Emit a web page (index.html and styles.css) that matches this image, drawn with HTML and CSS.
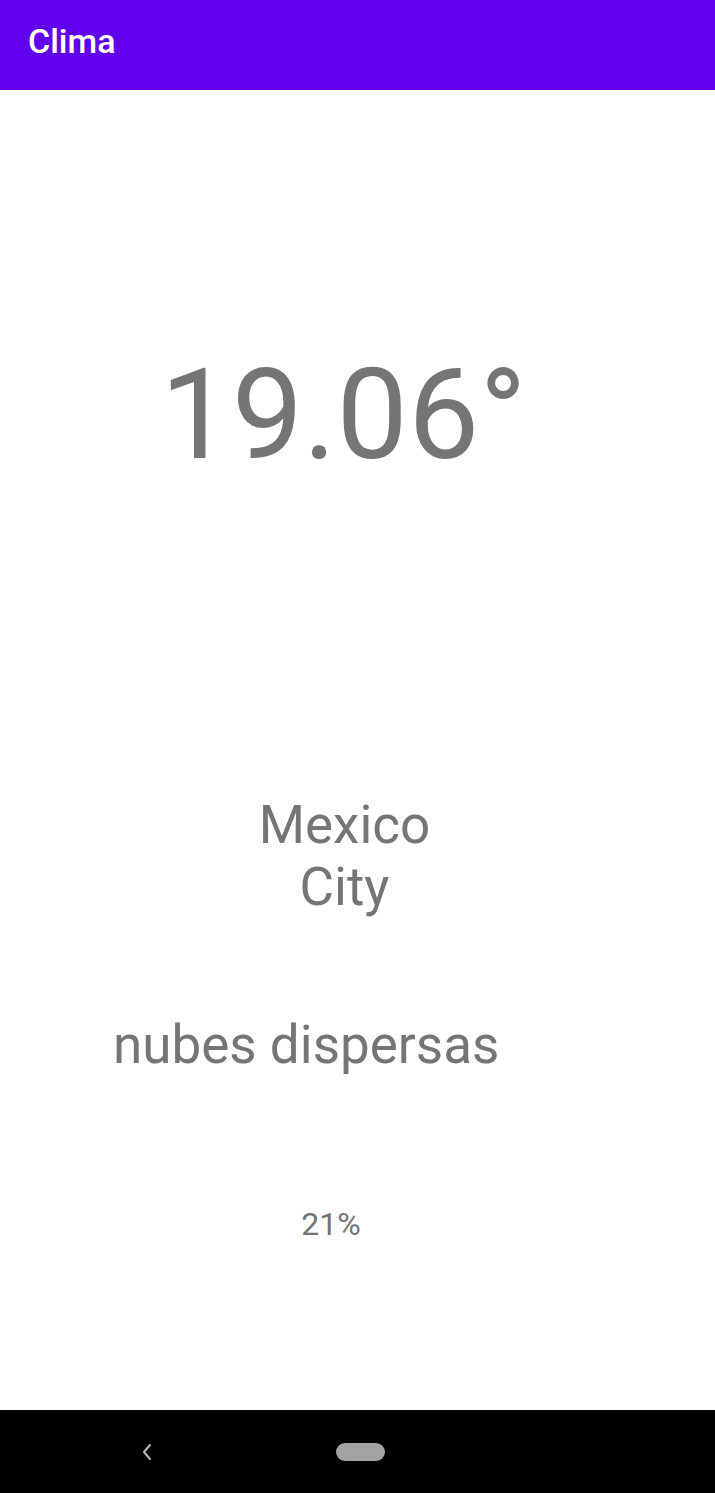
FILE: index.html
```html
<!DOCTYPE html>
<html lang="es">
<head>
<meta charset="utf-8">
<title>Clima</title>
<link rel="stylesheet" href="styles.css">
</head>
<body>
<div class="screen">
  <header class="appbar">
    <h1 class="appbar-title">Clima</h1>
  </header>
  <main class="content">
    <div class="temp">19.06°</div>
    <div class="city">Mexico City</div>
    <div class="desc">nubes dispersas</div>
    <div class="humidity">21%</div>
  </main>
  <nav class="navbar">
    <svg class="nav-back" width="14" height="22" viewBox="0 0 14 22">
      <path d="M10 4 L4 11 L10 18" fill="none" stroke="#bdbdbd" stroke-width="2" stroke-linecap="round" stroke-linejoin="round"/>
    </svg>
    <span class="nav-home"></span>
  </nav>
</div>
</body>
</html>
```
FILE: styles.css
```css
* { box-sizing: border-box; }
html, body { margin: 0; padding: 0; background: #ffffff; }
body { font-family: Roboto, "Noto Sans", "Liberation Sans", sans-serif; }
.screen {
  width: 715px;
  height: 1493px;
  display: flex;
  flex-direction: column;
  overflow: hidden;
}
.appbar {
  height: 90px;
  background: #6200ee;
  display: flex;
  align-items: center;
  padding-left: 28px;
  padding-bottom: 9px;
  flex: none;
}
.appbar-title {
  margin: 0;
  color: #ffffff;
  font-size: 34px;
  font-weight: 500;
  letter-spacing: 0;
}
.content {
  flex: 1;
  display: flex;
  flex-direction: column;
  color: #757575;
}
.temp {
  margin-top: 250px;
  font-size: 127px;
  line-height: 149px;
  text-align: center;
  padding-right: 28px;
}
.city {
  margin-top: 305px;
  align-self: center;
  width: 210px;
  margin-right: 26px;
  font-size: 53px;
  line-height: 62px;
  text-align: center;
}
.desc {
  margin-top: 96px;
  padding-left: 113px;
  font-size: 53px;
  line-height: 62px;
}
.humidity {
  margin-top: 128px;
  font-size: 32px;
  line-height: 40px;
  text-align: center;
  padding-right: 53px;
}
.navbar {
  height: 83px;
  background: #000000;
  flex: none;
  position: relative;
}
.nav-back {
  position: absolute;
  left: 140px;
  top: 31px;
}
.nav-home {
  position: absolute;
  left: 336px;
  top: 33px;
  width: 49px;
  height: 18px;
  border-radius: 9px;
  background: #a3a3a3;
}
```
